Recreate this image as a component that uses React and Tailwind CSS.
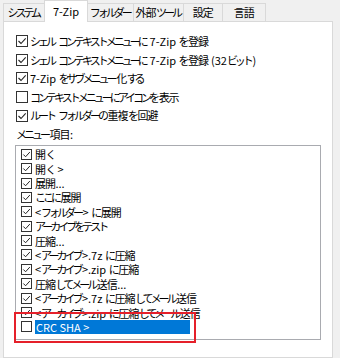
import React from 'react';

const tabs = [
  { label: 'システム', w: 'w-[42px]' },
  { label: '7-Zip', w: 'w-[44px]', active: true },
  { label: 'フォルダー', w: 'w-[47px]' },
  { label: '外部ツール', w: 'w-[51px]' },
  { label: '設定', w: 'w-[40px]' },
  { label: '言語', w: 'w-[44px]' },
];

const options = [
  ['シェル コンテキストメニューに 7-Zip を登録', true],
  ['シェル コンテキストメニューに 7-Zip を登録 (32ビット)', true],
  ['7-Zip をサブメニュー化する', true],
  ['コンテキストメニューにアイコンを表示', false],
  ['ルート フォルダーの重複を回避', true],
];

const menuItems = [
  ['開く', true],
  ['開く >', true],
  ['展開...', true],
  ['ここに展開', true],
  ['<フォルダー> に展開', true],
  ['アーカイブをテスト', true],
  ['圧縮...', true],
  ['<アーカイブ>.7z に圧縮', true],
  ['<アーカイブ>.zip に圧縮', true],
  ['圧縮してメール送信...', true],
  ['<アーカイブ>.7z に圧縮してメール送信', true],
  ['<アーカイブ>.zip に圧縮してメール送信', true],
  ['CRC SHA >', false, true],
];

// kana set tighter than kanji, latin left alone
function J({ text }) {
  const parts = text.match(/[\u3040-\u30ff]+|[\u4e00-\u9fff]+|[^\u3040-\u30ff\u4e00-\u9fff]+/g);
  return parts.map((p, i) => {
    if (/[\u3040-\u30ff]/.test(p)) return <span key={i} className="tracking-[-3px] pr-[1.5px]">{p}</span>;
    if (/[\u4e00-\u9fff]/.test(p)) return <span key={i} className="tracking-[-1px] pr-[0.5px]">{p}</span>;
    return <span key={i} className="whitespace-pre">{p}</span>;
  });
}

function Box({ checked, size = 'w-[12px] h-[12px]' }) {
  return (
    <span className={`${size} shrink-0 border border-[#333333] bg-white flex items-center justify-center`}>
      {checked && (
        <svg viewBox="0 0 10 10" className="w-full h-full">
          <polyline points="1.5,5 4,7.5 8.7,2.3" fill="none" stroke="#222" strokeWidth="1.1" />
        </svg>
      )}
    </span>
  );
}

export default function App() {
  return (
    <div className="relative w-[340px] h-[358px] overflow-hidden bg-[#f0f0f0] pl-[3px] flex flex-col font-['Noto_Sans_CJK_JP',sans-serif] text-[11px] text-black">
      <div className="flex items-end h-[21px] relative z-10">
        {tabs.map((t, i) => (
          <div
            key={t.label}
            className={`${t.w} ${i > 0 ? '-ml-px' : ''} border border-b-0 border-[#d9d9d9] flex justify-center whitespace-nowrap ${
              t.active ? 'h-[22px] -mb-px bg-white relative z-10 items-start pt-[2px]' : 'h-[18px] bg-[#f0f0f0] items-center'
            }`}
          >
            <J text={t.label} />
          </div>
        ))}
      </div>
      <div className="w-[330px] flex-1 bg-white border border-[#d9d9d9] pt-[10px] pl-[12px]">
        {options.map(([label, checked]) => (
          <div key={label} className="h-[18.6px] flex items-center gap-[2px]">
            <Box checked={checked} />
            <span className="whitespace-nowrap">
              <J text={label} />
            </span>
          </div>
        ))}
        <div className="h-[18.6px] flex items-center">
          <J text="メニュー項目:" />
        </div>
        <div className="-ml-px mt-[1.5px] w-[306px] h-[195px] border border-[#a9abb0] bg-white pt-px pl-[5px]">
          {menuItems.map(([label, checked, selected]) => (
            <div key={label} className="h-[14.4px] flex items-center gap-[3px]">
              <Box checked={checked} size="w-[11px] h-[11px]" />
              <span
                className={`whitespace-nowrap leading-[14px] ${
                  selected ? 'bg-[#0078d7] text-white w-[155px] h-[14px] pl-px' : ''
                }`}
              >
                <J text={label} />
              </span>
            </div>
          ))}
        </div>
      </div>
      <div className="absolute left-[14px] top-[312px] w-[182px] h-[31px] border-2 border-[#e5202a] pointer-events-none" />
    </div>
  );
}
